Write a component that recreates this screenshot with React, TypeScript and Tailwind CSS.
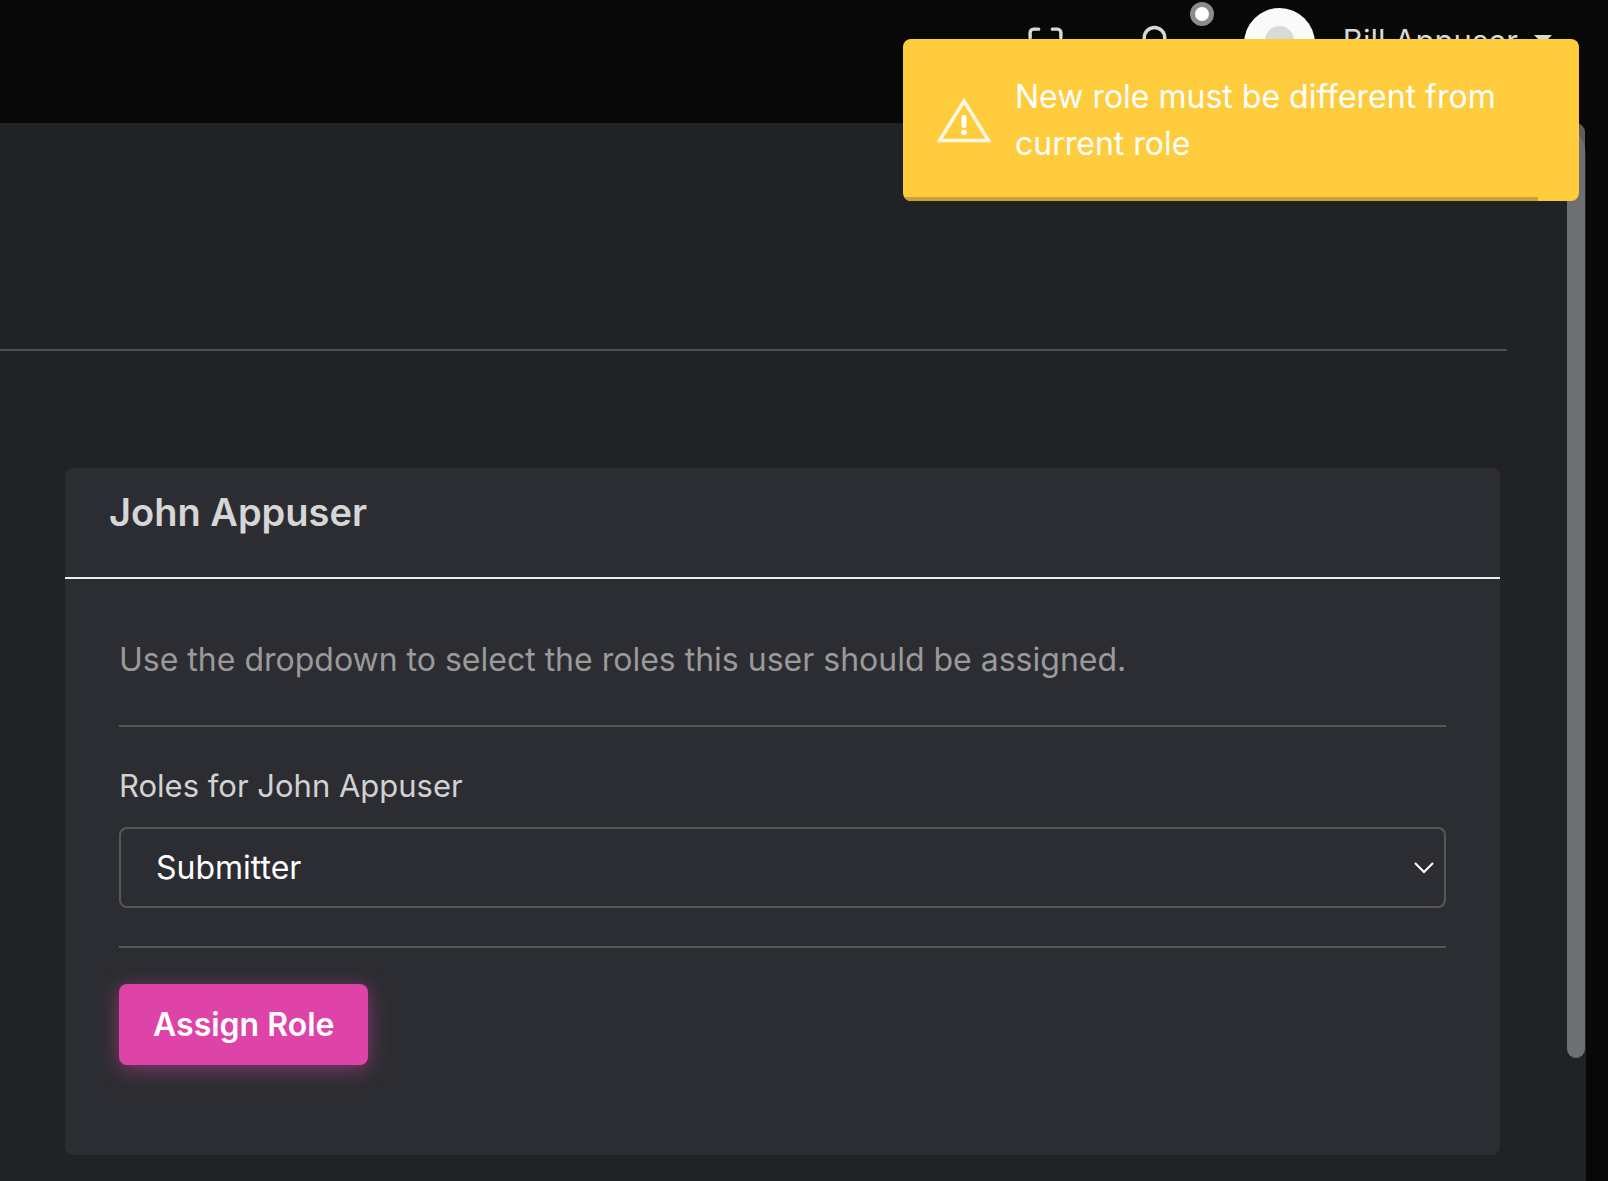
import { useState } from "react";

function MaximizeIcon() {
  return (
    <svg viewBox="0 0 24 24" className="size-[41px]" fill="none" stroke="currentColor" strokeWidth="2" strokeLinecap="round" strokeLinejoin="round" aria-hidden="true">
      <path d="M8 3H5a2 2 0 0 0-2 2v3m18 0V5a2 2 0 0 0-2-2h-3m0 18h3a2 2 0 0 0 2-2v-3M3 16v3a2 2 0 0 0 2 2h3" />
    </svg>
  );
}

function BellIcon() {
  return (
    <svg viewBox="0 0 24 24" className="size-[41px]" fill="none" stroke="currentColor" strokeWidth="2" strokeLinecap="round" strokeLinejoin="round" aria-hidden="true">
      <path d="M18 8A6 6 0 0 0 6 8c0 7-3 9-3 9h18s-3-2-3-9" />
      <path d="M13.73 21a2 2 0 0 1-3.46 0" />
    </svg>
  );
}

function Avatar() {
  return (
    <svg viewBox="0 0 71 71" className="size-[71px]" aria-hidden="true">
      <defs>
        <clipPath id="avatar-clip">
          <circle cx="35.5" cy="35.5" r="35.5" />
        </clipPath>
      </defs>
      <g clipPath="url(#avatar-clip)">
        <rect width="71" height="71" fill="#fafafa" />
        <circle cx="35.5" cy="32.5" r="14.5" fill="#d9d9d9" />
        <ellipse cx="35.5" cy="68" rx="25" ry="18" fill="#d9d9d9" />
      </g>
    </svg>
  );
}

function Header() {
  return (
    <header className="flex h-[123px] items-start justify-end pr-14 pt-2 text-[#d9d9d9]">
      <div className="flex h-[71px] items-center">
        <button type="button" aria-label="Full screen" className="mr-[68px] pt-0.5">
          <MaximizeIcon />
        </button>
        <button type="button" aria-label="Notifications" className="relative mr-[69px] pt-0.5">
          <BellIcon />
          <span className="absolute -top-5 left-[56px] size-6 rounded-full border-5 border-[#8c8c8c] bg-white" />
        </button>
        <button type="button" className="flex items-center">
          <Avatar />
          <span className="ml-7 pb-1.5 text-[31px] leading-[48px]">Bill Appuser</span>
          <svg viewBox="0 0 18 9" className="mb-2 ml-4 h-[9px] w-[18px]" fill="currentColor" aria-hidden="true">
            <path d="M0 0h18L9 9z" />
          </svg>
        </button>
      </div>
    </header>
  );
}

function Toast() {
  return (
    <div role="alert" className="absolute right-[29px] top-[39px] flex w-[676px] items-center overflow-hidden rounded-lg bg-[#ffcc3d] py-[34px] pl-[34px] pr-16 text-white">
      <svg viewBox="0 0 54 46" className="h-[46px] w-[54px] shrink-0" aria-hidden="true">
        <path d="M27 4 51.5 43.5h-49z" fill="none" stroke="#fff" strokeOpacity="0.85" strokeWidth="3.5" />
        <rect x="24.5" y="18" width="5" height="13" rx="2" fill="#fff" />
        <circle cx="27" cy="35.5" r="2.8" fill="#fff" />
      </svg>
      <p className="ml-6 text-[32px] leading-[47px]">New role must be different from current role</p>
      <span className="absolute bottom-0 left-0 right-[41px] h-1 bg-[#c9a136]" />
    </div>
  );
}

function RoleCard() {
  const [role, setRole] = useState("Submitter");
  return (
    <section className="ml-[65px] mr-[86px] mt-[117px] rounded-lg bg-[#2c2d32] pb-[90px]">
      <div className="h-[111px] border-b-2 border-[#eceff1] px-11 pt-5">
        <h2 className="text-[38px] font-semibold leading-[48px] text-[#d6d6d6]">John Appuser</h2>
      </div>
      <form className="px-[54px] pt-[57px]" onSubmit={(e) => e.preventDefault()}>
        <p className="text-[32px] leading-[48px] text-[#9a9a9a]">Use the dropdown to select the roles this user should be assigned.</p>
        <hr className="mt-[41px] border-t-2 border-[#56575b]" />
        <label htmlFor="role" className="mt-[35px] block text-[31px] leading-[48px] text-[#d2d2d2]">Roles for John Appuser</label>
        <div className="relative mt-[17px]">
          <select
            id="role"
            value={role}
            onChange={(e) => setRole(e.target.value)}
            className="block h-[81px] w-full appearance-none rounded-lg border-2 border-[#56575b] bg-[#2c2d32] pl-[35px] pr-14 text-[32px] text-white"
          >
            <option>Submitter</option>
            <option>Developer</option>
            <option>Project Manager</option>
          </select>
          <svg viewBox="0 0 20 12" className="pointer-events-none absolute right-3 top-[35px] h-3 w-5" fill="none" stroke="#fff" strokeWidth="2" aria-hidden="true">
            <path d="M1 1l9 9 9-9" />
          </svg>
        </div>
        <hr className="mt-[38px] border-t-2 border-[#56575b]" />
        <button type="submit" className="mt-9 h-[81px] rounded-lg bg-[#de43a8] px-[34px] text-[32px] font-semibold text-white shadow-[0_4px_20px_rgba(222,67,168,0.5)]">
          Assign Role
        </button>
      </form>
    </section>
  );
}

export default function App() {
  return (
    <div className="relative flex min-h-screen flex-col bg-[#080808] font-['Inter',sans-serif]">
      <Header />
      <main className="relative mr-[22px] flex-1 rounded-tr-[32px] bg-[#212226] pb-[26px] pt-[226px]">
        <hr className="mr-[79px] border-t-2 border-[#4e4f51]" />
        <RoleCard />
        <div className="absolute right-px top-0 bottom-[123px] w-[18px] rounded-full bg-white/35" />
      </main>
      <Toast />
    </div>
  );
}
